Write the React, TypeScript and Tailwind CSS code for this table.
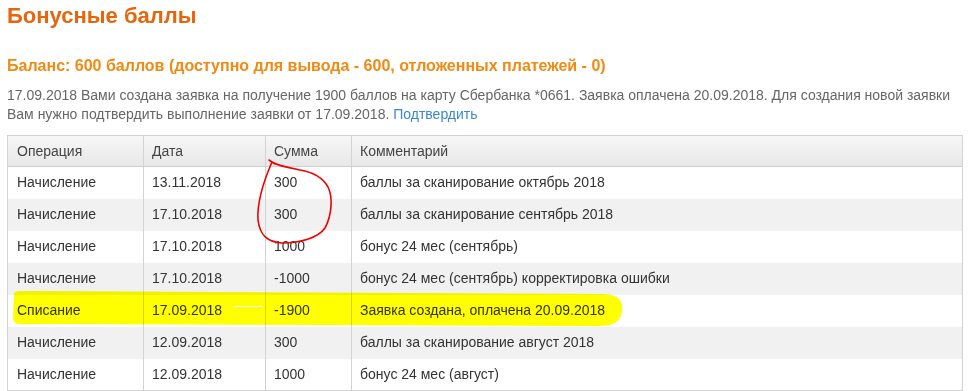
import React from "react";

const rows: [string, string, string, string][] = [
  ["Начисление", "13.11.2018", "300", "баллы за сканирование октябрь 2018"],
  ["Начисление", "17.10.2018", "300", "баллы за сканирование сентябрь 2018"],
  ["Начисление", "17.10.2018", "1000", "бонус 24 мес (сентябрь)"],
  ["Начисление", "17.10.2018", "-1000", "бонус 24 мес (сентябрь) корректировка ошибки"],
  ["Списание", "17.09.2018", "-1900", "Заявка создана, оплачена 20.09.2018"],
  ["Начисление", "12.09.2018", "300", "баллы за сканирование август 2018"],
  ["Начисление", "12.09.2018", "1000", "бонус 24 мес (август)"],
];

export default function App() {
  return (
    <div
      className="relative w-[973px] h-[391px] overflow-hidden bg-white"
      style={{ fontFamily: '"Liberation Sans", Arial, sans-serif' }}
    >
      <div className="pl-[7px] pr-[10px]">
        <h1 className="pt-[3px] text-[22px] leading-[25px] font-bold text-[#e8650c]">
          Бонусные баллы
        </h1>
        <div className="mt-[29px] text-[16px] leading-[18px] font-bold text-[#f08a12]">
          Баланс: 600 баллов (доступно для вывода - 600, отложенных платежей - 0)
        </div>
        <p className="mt-[11px] text-[14px] leading-[19px] text-[#666]">
          17.09.2018 Вами создана заявка на получение 1900 баллов на карту Сбербанка *0661. Заявка оплачена 20.09.2018. Для создания новой заявки Вам нужно подтвердить выполнение заявки от 17.09.2018.{" "}
          <span className="text-[#3a87cf]">Подтвердить</span>
        </p>
        <table className="mt-[11px] w-[956px] border-collapse border border-[#d3d3d3] text-[14px] text-[#333] table-fixed">
          <colgroup>
            <col className="w-[136px]" />
            <col className="w-[122px]" />
            <col className="w-[86px]" />
            <col />
          </colgroup>
          <thead>
            <tr className="h-[31px] bg-gradient-to-b from-[#f7f7f7] to-[#e8e8e8] border-b border-[#cfcfcf]">
              <th className="text-left font-normal pl-[9px] border-r border-[#d3d3d3] text-[#444]">Операция</th>
              <th className="text-left font-normal pl-[8px] border-r border-[#d3d3d3] text-[#444]">Дата</th>
              <th className="text-left font-normal pl-[8px] border-r border-[#d3d3d3] text-[#444]">Сумма</th>
              <th className="text-left font-normal pl-[8px] text-[#444]">Комментарий</th>
            </tr>
          </thead>
          <tbody>
            {rows.map((r, i) => (
              <tr key={i} className={`h-[32px] ${i % 2 === 1 ? "bg-[#f1f1f1]" : "bg-white"}`}>
                <td className="pl-[9px] border-r border-[#d3d3d3]">{r[0]}</td>
                <td className="pl-[8px] border-r border-[#d3d3d3]">{r[1]}</td>
                <td className="pl-[8px] border-r border-[#d3d3d3]">{r[2]}</td>
                <td className="pl-[8px]">{r[3]}</td>
              </tr>
            ))}
          </tbody>
        </table>
      </div>
      <svg
        className="absolute left-0 top-0 pointer-events-none"
        width="973"
        height="391"
        viewBox="0 0 973 391"
      >
        <path
          d="M14,294 C14,290 20,291 40,291 L600,294 C617,294 623,299 622,310 C621,322 614,326 598,326 L40,324 C22,324 14,326 13,319 Z"
          fill="#ffff00"
          style={{ mixBlendMode: "multiply" }}
        />
        <line x1="233" y1="306.5" x2="262" y2="306.5" stroke="#ffffff" strokeWidth="1" />
        <path
          d="M272,162 C278,166 290,168 300,170 C312,172 322,176 328,187 C333,197 332,215 325,228 C318,238 300,243 282,243 C268,242 260,236 258,220 C257,205 262,185 272,162 M269,160 L275,164"
          fill="none"
          stroke="#ee0000"
          strokeWidth="1.6"
          strokeLinecap="round"
          strokeLinejoin="round"
        />
      </svg>
    </div>
  );
}
